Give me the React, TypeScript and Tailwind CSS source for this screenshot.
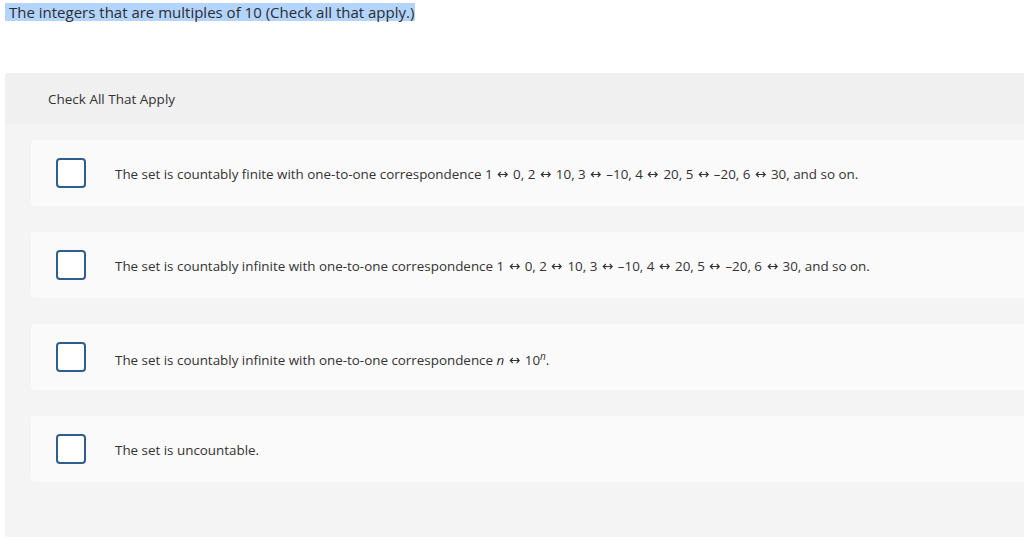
import React from 'react';

const font = { fontFamily: '"Open Sans", "Liberation Sans", sans-serif' };

function Arrow() {
  return (
    <svg className="inline-block mx-[4.5px] align-[1px]" width="11.5" height="7" viewBox="0 0 11 7" fill="none" stroke="#333" strokeWidth="1.1">
      <path d="M1 3.5h9M3.5 1L1 3.5 3.5 6M7.5 1L10 3.5 7.5 6" />
    </svg>
  );
}

const options: React.ReactNode[] = [
  <>
    The set is countably finite with one-to-one correspondence 1<Arrow />0, 2<Arrow />10, 3<Arrow />–10, 4<Arrow />20, 5<Arrow />–20, 6<Arrow />30, and so on.
  </>,
  <>
    The set is countably infinite with one-to-one correspondence 1<Arrow />0, 2<Arrow />10, 3<Arrow />–10, 4<Arrow />20, 5<Arrow />–20, 6<Arrow />30, and so on.
  </>,
  <>
    The set is countably infinite with one-to-one correspondence <i>n</i><Arrow />10<sup className="italic text-[10px]">n</sup>.
  </>,
  <>The set is uncountable.</>,
];

export default function App() {
  return (
    <div className="w-[1024px] h-[540px] overflow-hidden bg-white text-[#333]" style={font}>
      {/* Question */}
      <div className="pt-[3px] pl-[5px] flex">
        <span className="bg-[#b3d4fc] pl-[4px] pr-[1px] text-[15px] leading-[18px] text-[#2d2d2d]">
          The integers that are multiples of 10 (Check all that apply.)
        </span>
      </div>

      {/* Panel */}
      <div className="ml-[5px] mt-[52px] w-[1040px] rounded-l-[3px] overflow-hidden">
        <div className="h-[51px] bg-[#f0f0f0] pl-[43px] pt-[2px] flex items-center text-[13.5px] text-[#333]">
          Check All That Apply
        </div>
        <div className="bg-[#f4f4f4] pt-[16px] pb-[55px] pl-[26px] flex flex-col gap-[26px]">
          {options.map((o, i) => (
            <div key={i} className="h-[66px] bg-[#fafafa] rounded-[4px] flex items-center">
              <div className="ml-[25px] w-[30px] h-[30px] rounded-[4px] border-2 border-[#2f5d8f] bg-white shrink-0" />
              <div className={`ml-[29px] text-[13.4px] text-[#333] whitespace-nowrap ${i === 2 ? 'pt-[7px]' : 'pt-[3px]'}`}>{o}</div>
            </div>
          ))}
        </div>
      </div>
    </div>
  );
}
